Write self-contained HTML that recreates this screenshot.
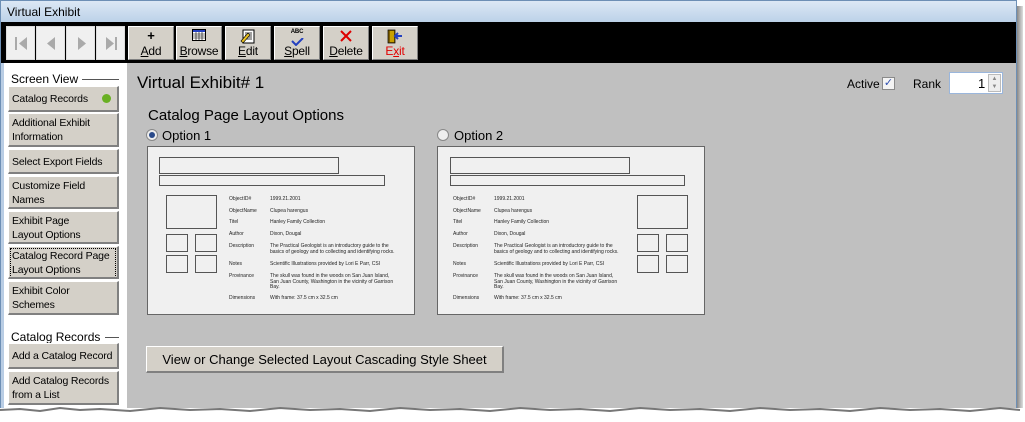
<!DOCTYPE html>
<html><head><meta charset="utf-8"><style>
*{margin:0;padding:0;box-sizing:border-box}
body{width:1025px;height:422px;background:#fff;position:relative;overflow:hidden;font-family:"Liberation Sans",Arial,sans-serif;font-size:12px;color:#000}
.a{position:absolute}
.win{left:0;top:0;width:1017px;height:412px;background:#c0c0c0;border:1px solid #6d8fb5}
.shadow{left:1017px;top:6px;width:6px;height:406px;background:linear-gradient(90deg,#888,#ddd)}
.title{left:1px;top:1px;width:1015px;height:21px;background:linear-gradient(#dce8f5,#bcd1e8);font-size:12px;padding:4px 6px}
.tb{left:1px;top:22px;width:1015px;height:41px;background:#000}
.nav{top:26px;width:29px;height:34px;background:#f0f0f0;border:1px solid #ddd}
.btn{top:26px;width:46px;height:34px;background:#d4d0c8;border-top:1px solid #fff;border-left:1px solid #fff;border-right:1px solid #808080;border-bottom:1px solid #808080;font-size:12px;text-align:center;padding-top:17px;letter-spacing:-0.2px}
.ic{position:absolute;left:0;right:0;top:2px;text-align:center;font-size:13px;line-height:13px}
.side{left:1px;top:63px;width:126px;height:349px;background:#fff;border-left:3px solid #b9cde4}
.sb{left:8px;width:111px;background:#d4d0c8;border-top:1px solid #fff;border-left:1px solid #fff;border-right:2px solid #808080;border-bottom:2px solid #808080;font-size:10.5px;line-height:14px;padding:2px 3px;color:#000;letter-spacing:-0.15px;overflow:hidden}
.nw{white-space:nowrap}
.hd{font-size:12px;left:11px}
.card{width:268px;height:169px;background:#f0f0f0;border:1px solid #666}
.bx{position:absolute;border:1px solid #555}
.t{position:absolute;font-size:5px;line-height:5.5px;white-space:nowrap;color:#222}
.torn{left:0;top:408px;width:1025px;height:14px;background:#fff}
</style></head><body>
<div class="a win"></div>
<div class="a shadow"></div>
<div class="a title">Virtual Exhibit</div>
<div class="a tb"></div>
<div class="a nav" style="left:6px"><svg width="29" height="34"><path d="M9 10v13" stroke="#aaa" stroke-width="2"/><path d="M20 10L12 16.5L20 23Z" fill="#aaa"/></svg></div>
<div class="a nav" style="left:36px"><svg width="29" height="34"><path d="M18 10L10 16.5L18 23Z" fill="#aaa"/></svg></div>
<div class="a nav" style="left:66px"><svg width="29" height="34"><path d="M11 10L19 16.5L11 23Z" fill="#aaa"/></svg></div>
<div class="a nav" style="left:96px"><svg width="29" height="34"><path d="M9 10L17 16.5L9 23Z" fill="#aaa"/><path d="M19 10v13" stroke="#aaa" stroke-width="2"/></svg></div>
<div class="a btn" style="left:128px"><div class="ic"><b>+</b></div><u>A</u>dd</div>
<div class="a btn" style="left:176px"><div class="ic"><svg width="14" height="12"><rect x="0.5" y="0.5" width="13" height="11" fill="#fff" stroke="#000"/><rect x="1" y="1" width="12" height="2" fill="#2340c0"/><path d="M1 5h12M1 7h12M1 9h12M4 3v9M7 3v9M10 3v9" stroke="#000" stroke-width=".6"/></svg></div><u>B</u>rowse</div>
<div class="a btn" style="left:225px"><div class="ic"><svg width="16" height="15"><rect x="3" y="1" width="11" height="13" fill="#fff" stroke="#000"/><path d="M5 4h7M5 6h7M5 8h7M5 10h7" stroke="#000" stroke-width=".7"/><path d="M1 12L8 4l2 2-7 8z" fill="#e8c020" stroke="#000" stroke-width=".6"/></svg></div><u>E</u>dit</div>
<div class="a btn" style="left:274px"><div class="ic"><span style="font-size:6px;font-weight:bold;display:block;line-height:6px">ABC</span><svg width="14" height="8"><path d="M2 3l4 4 7-7" stroke="#2340c0" stroke-width="2" fill="none"/></svg></div><u>S</u>pell</div>
<div class="a btn" style="left:323px"><div class="ic"><svg width="14" height="14"><path d="M2 2l10 10M12 2L2 12" stroke="#d00" stroke-width="2"/></svg></div><u>D</u>elete</div>
<div class="a btn" style="left:372px;color:#e00000"><div class="ic"><svg width="18" height="15"><rect x="2" y="1" width="7" height="13" fill="#806000" stroke="#000" stroke-width=".7"/><rect x="4" y="2" width="4" height="11" fill="#c8a000"/><path d="M10 7h6M12 4l-3 3 3 3" stroke="#2340c0" stroke-width="2" fill="none"/></svg></div>E<u>x</u>it</div>

<div class="a side"></div>
<div class="a hd" style="top:72px">Screen View</div>
<div class="a" style="left:82px;top:79px;width:37px;border-top:1px solid #555"></div>
<div class="a sb nw" style="top:86px;height:26px;padding-top:5px">Catalog Records<span style="position:absolute;left:93px;top:7px;width:9px;height:9px;border-radius:50%;background:#6ab023"></span></div>
<div class="a sb" style="top:113px;height:34px">Additional Exhibit<br>Information</div>
<div class="a sb nw" style="top:149px;height:25px;padding-top:5px">Select Export Fields</div>
<div class="a sb" style="top:176px;height:33px">Customize Field<br>Names</div>
<div class="a sb" style="top:211px;height:33px">Exhibit Page<br>Layout Options</div>
<div class="a sb nw" style="top:246px;height:33px"><div style="border:1px dotted #000;margin:-1px -2px;padding:0 1px">Catalog Record Page<br>Layout Options</div></div>
<div class="a sb" style="top:281px;height:34px">Exhibit Color<br>Schemes</div>
<div class="a hd" style="top:330px">Catalog Records</div>
<div class="a" style="left:105px;top:337px;width:14px;border-top:1px solid #555"></div>
<div class="a sb nw" style="top:343px;height:26px;padding-top:5px">Add a Catalog Record</div>
<div class="a sb nw" style="top:371px;height:34px">Add Catalog Records<br>from a List</div>

<div class="a" style="left:137px;top:73px;font-size:17px">Virtual Exhibit# 1</div>
<div class="a" style="left:847px;top:77px;font-size:12px">Active</div>
<div class="a" style="left:882px;top:77px;width:13px;height:13px;background:#f4f4f4;border:1px solid #8a8a8a;color:#3050b0;font-size:11px;line-height:11px;text-align:center">✓</div>
<div class="a" style="left:913px;top:77px;font-size:12px">Rank</div>
<div class="a" style="left:949px;top:72px;width:54px;height:22px;background:#fff;border:1px solid #9ab6dc;font-size:13px;padding:3px 0 0 28px">1</div>
<div class="a" style="left:988px;top:74px;width:13px;height:18px;background:#eee;border:1px solid #bbb;font-size:6px;color:#888;text-align:center;line-height:8px">▲<br>▼</div>
<div class="a" style="left:148px;top:107px;font-size:15px">Catalog Page Layout Options</div>
<div class="a" style="left:146px;top:129px;width:12px;height:12px;border-radius:50%;background:#eee;border:1px solid #888"><div style="margin:2px;width:6px;height:6px;border-radius:50%;background:#2a4a8a"></div></div>
<div class="a" style="left:162px;top:128px;font-size:13px">Option 1</div>
<div class="a" style="left:437px;top:129px;width:12px;height:12px;border-radius:50%;background:#eee;border:1px solid #888"></div>
<div class="a" style="left:454px;top:128px;font-size:13px">Option 2</div>

<div class="a card" style="left:147px;top:146px">
<div class="bx" style="left:11px;top:10px;width:180px;height:17px"></div>
<div class="bx" style="left:11px;top:28px;width:226px;height:11px"></div>
<div class="bx" style="left:18px;top:48px;width:51px;height:34px"></div>
<div class="bx" style="left:18px;top:87px;width:22px;height:18px"></div>
<div class="bx" style="left:47px;top:87px;width:22px;height:18px"></div>
<div class="bx" style="left:18px;top:108px;width:22px;height:18px"></div>
<div class="bx" style="left:47px;top:108px;width:22px;height:18px"></div>
<div class="t" style="left:81px;top:50px">ObjectID#</div><div class="t" style="left:122px;top:50px">1999.21.2001</div>
<div class="t" style="left:81px;top:62px">ObjectName</div><div class="t" style="left:122px;top:62px">Clupea harengus</div>
<div class="t" style="left:81px;top:73px">Titel</div><div class="t" style="left:122px;top:73px">Hanley Family Collection</div>
<div class="t" style="left:81px;top:85px">Author</div><div class="t" style="left:122px;top:85px">Dixon, Dougal</div>
<div class="t" style="left:81px;top:97px">Description</div><div class="t" style="left:122px;top:97px">The Practical Geologist is an introductory guide to the<br>basics of geology and to collecting and identifying rocks.</div>
<div class="t" style="left:81px;top:115px">Notes</div><div class="t" style="left:122px;top:115px">Scientific Illustrations provided by Lori E Parr, CSI</div>
<div class="t" style="left:81px;top:127px">Provinance</div><div class="t" style="left:122px;top:127px">The skull was found in the woods on San Juan Island,<br>San Juan County, Washington in the vicinity of Garrison<br>Bay.</div>
<div class="t" style="left:81px;top:149px">Dimensions</div><div class="t" style="left:122px;top:149px">With frame: 37.5 cm x 32.5 cm</div>
</div>

<div class="a card" style="left:437px;top:146px">
<div class="bx" style="left:12px;top:10px;width:180px;height:17px"></div>
<div class="bx" style="left:12px;top:28px;width:235px;height:11px"></div>
<div class="bx" style="left:199px;top:48px;width:51px;height:34px"></div>
<div class="bx" style="left:199px;top:87px;width:22px;height:18px"></div>
<div class="bx" style="left:228px;top:87px;width:22px;height:18px"></div>
<div class="bx" style="left:199px;top:108px;width:22px;height:18px"></div>
<div class="bx" style="left:228px;top:108px;width:22px;height:18px"></div>
<div class="t" style="left:15px;top:50px">ObjectID#</div><div class="t" style="left:56px;top:50px">1999.21.2001</div>
<div class="t" style="left:15px;top:62px">ObjectName</div><div class="t" style="left:56px;top:62px">Clupea harengus</div>
<div class="t" style="left:15px;top:73px">Titel</div><div class="t" style="left:56px;top:73px">Hanley Family Collection</div>
<div class="t" style="left:15px;top:85px">Author</div><div class="t" style="left:56px;top:85px">Dixon, Dougal</div>
<div class="t" style="left:15px;top:97px">Description</div><div class="t" style="left:56px;top:97px">The Practical Geologist is an introductory guide to the<br>basics of geology and to collecting and identifying rocks.</div>
<div class="t" style="left:15px;top:115px">Notes</div><div class="t" style="left:56px;top:115px">Scientific Illustrations provided by Lori E Parr, CSI</div>
<div class="t" style="left:15px;top:127px">Provinance</div><div class="t" style="left:56px;top:127px">The skull was found in the woods on San Juan Island,<br>San Juan County, Washington in the vicinity of Garrison<br>Bay.</div>
<div class="t" style="left:15px;top:149px">Dimensions</div><div class="t" style="left:56px;top:149px">With frame: 37.5 cm x 32.5 cm</div>
</div>

<div class="a" style="left:146px;top:346px;width:358px;height:27px;background:#d4d0c8;border-top:1px solid #fff;border-left:1px solid #fff;border-right:2px solid #808080;border-bottom:2px solid #808080;font-size:13px;text-align:center;padding-top:5px">View or Change Selected Layout Cascading Style Sheet</div>
<div class="a torn"></div>
<svg class="a" style="left:0;top:402px" width="1025" height="12"><path d="M0 8 L20 7 L40 9 L60 6 L80 8 L100 7 L130 9 L160 6 L190 8 L220 7 L250 9 L280 6 L310 8 L340 7 L370 9 L400 6 L430 8 L460 7 L490 9 L520 6 L550 8 L580 7 L610 9 L640 6 L670 8 L700 7 L730 9 L760 6 L790 8 L820 7 L850 9 L880 6 L910 8 L940 7 L970 9 L1000 6 L1020 8 L1020 12 L0 12Z" fill="#fff"/><path d="M0 8 L20 7 L40 9 L60 6 L80 8 L100 7 L130 9 L160 6 L190 8 L220 7 L250 9 L280 6 L310 8 L340 7 L370 9 L400 6 L430 8 L460 7 L490 9 L520 6 L550 8 L580 7 L610 9 L640 6 L670 8 L700 7 L730 9 L760 6 L790 8 L820 7 L850 9 L880 6 L910 8 L940 7 L970 9 L1000 6 L1020 8" stroke="#777" stroke-width="2" fill="none"/></svg>
</body></html>
